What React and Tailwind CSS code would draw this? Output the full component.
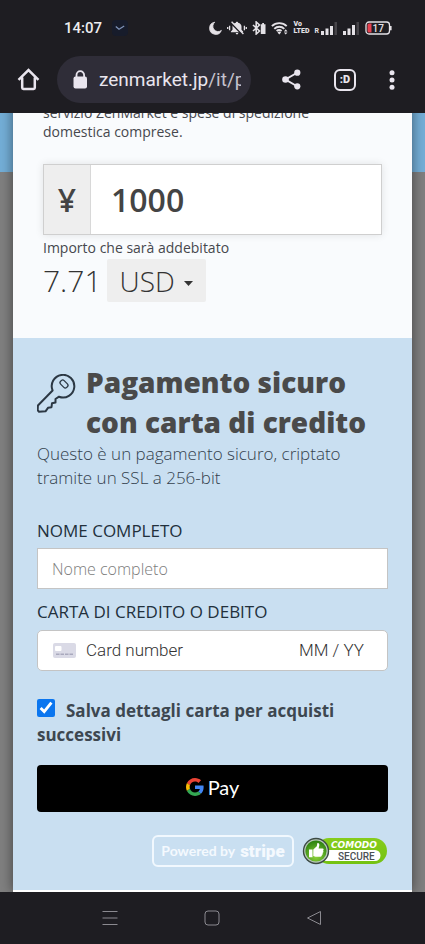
const SANS = "font-['Open_Sans',sans-serif]";
const ROBOTO = "font-['Roboto',sans-serif]";

function StatusIcons() {
  return (
    <div className="flex items-center gap-[5px] text-[#e4e1e6]">
      <svg width="13" height="14" viewBox="0 0 13 14" fill="currentColor">
        <path d="M5.800 1.200A6.100 6.100 0 1 0 12.400 9.400 5.200 5.200 0 0 1 5.800 1.200Z" stroke="currentColor" strokeWidth=".8" strokeLinejoin="round" />
      </svg>
      <svg width="20" height="14" viewBox="0 0 20 14" fill="currentColor">
        <path d="M10 .8c.7 0 1.100.4 1.100 1 2.200.5 3.400 2 3.400 3.800v3.200l1.600 1.700v.8H3.900v-.8l1.600-1.700V5.600c0-1.800 1.200-3.300 3.400-3.800 0-.6.400-1 1.100-1ZM8.700 12.100h2.600a1.300 1.300 0 0 1-2.600 0Z" />
        <path d="M4 1.800 15 13.200" stroke="#1e1d22" strokeWidth="1.800" />
        <path d="M4.600.8 16.400 13" stroke="currentColor" strokeWidth="1.400" />
        <path d="M2.600 4.800v4.400M.7 6v2M17.400 4.800v4.400M19.300 6v2" stroke="currentColor" strokeWidth="1.300" />
      </svg>
      <svg width="14" height="14" viewBox="0 0 14 14" fill="none" stroke="currentColor">
        <path d="m1 4 6.500 6-3.300 3V1l3.300 3L1 10" strokeWidth="1.600" />
        <path d="M8.800 3.300h1.400V2h1.800v1.300h1.500V13H8.800Z" fill="currentColor" stroke="none" />
      </svg>
      <svg width="18" height="14" viewBox="0 0 18 14" fill="none" stroke="currentColor">
        <path d="M.9 5.200a10.500 10.500 0 0 1 14.800 0M3.300 7.800a7 7 0 0 1 10 0M5.600 10.100a4 4 0 0 1 5 0" strokeWidth="1.900" />
        <path d="m6.500 11.400 1.800 2 1.800-2a2.600 2.600 0 0 0-3.600 0Z" fill="currentColor" stroke="none" />
        <path d="m12.900 10.400 1.800-2.200 1.800 2.200ZM12.900 11.400l1.800 2.200 1.800-2.200Z" fill="currentColor" stroke="none" />
      </svg>
      <div className="flex w-[16px] flex-col text-[7px] leading-[7px] font-black">
        <span>Vo</span>
        <span>LTED</span>
      </div>
      <div className="flex items-end gap-[2px]">
        <span className="text-[7px] leading-[7px] font-bold">R</span>
        <svg width="17" height="13" viewBox="0 0 17 13" fill="currentColor">
          <path d="M0 9h3v4H0ZM4.500 6.500h3V13h-3ZM9 4h3v9H9Z" />
          <path d="M13.500 0H16v13h-2.500Z" opacity=".2" />
        </svg>
      </div>
      <svg width="17" height="13" viewBox="0 0 17 13" fill="currentColor">
        <path d="M0 9h3v4H0ZM4.500 6.500h3V13h-3ZM9 3h3v10H9Z" />
        <path d="M13.500 0H16v13h-2.500Z" opacity=".2" />
      </svg>
      <svg width="28" height="14" viewBox="0 0 28 14" fill="none">
        <rect x="1" y="1" width="23.500" height="12" rx="3" stroke="currentColor" strokeWidth="1.300" />
        <path d="M25.800 5v4.200" stroke="currentColor" strokeWidth="1.600" />
        <path d="M2.500 4a1.500 1.500 0 0 1 1.500-1.500h2.500v9H4A1.500 1.500 0 0 1 2.500 10Z" fill="#e5404f" />
        <text x="7.500" y="10.600" fontSize="10" fontWeight="500" fill="currentColor">17</text>
      </svg>
    </div>
  );
}

function BrowserHeader() {
  return (
    <header className={`bg-[#1e1d22] ${ROBOTO}`}>
      <div className="flex h-14 items-center pr-[32px] pl-16 text-[#ececf0]">
        <span className="text-[15px] leading-5 font-medium">14:07</span>
        <span className="ml-[10px] flex h-4 w-4 items-center justify-center rounded-sm bg-[#171c2b]">
          <svg width="10" height="6" viewBox="0 0 10 6" fill="none" stroke="#7f93b8" strokeWidth="1.300">
            <path d="M.8 1.500 4 4.200 9.200 1" />
          </svg>
        </span>
        <div className="ml-auto">
          <StatusIcons />
        </div>
      </div>
      <div className="flex items-center pr-[29px] pb-[10px] pl-[17px] text-[#e9e5ee]">
        <button type="button" aria-label="Home" className="shrink-0">
          <svg width="23" height="23" viewBox="0 0 23 23" fill="none" stroke="currentColor" strokeWidth="2.500">
            <path d="M1.500 11.800 11.500 2l10 9.800M5.200 9.500v10.300q0 1.200 1.200 1.200h10.200q1.200 0 1.200-1.200V9.500" />
          </svg>
        </button>
        <div className="ml-[17px] flex h-[47px] min-w-0 flex-1 items-center rounded-full bg-[#2f2d38] pr-[10px] pl-4">
          <svg width="15" height="19" viewBox="0 0 15 19" className="shrink-0" fill="currentColor">
            <rect x=".5" y="6.500" width="13.500" height="12" rx="2" />
            <path d="M3.500 7.500V5a3.800 3.800 0 0 1 7.600 0v2.500" fill="none" stroke="currentColor" strokeWidth="1.800" />
          </svg>
          <span className="ml-[11px] min-w-0 flex-1 overflow-hidden text-[19px] leading-7 whitespace-nowrap">
            zenmarket.jp<span className="text-[#c6c2cd]">/it/p</span>
          </span>
        </div>
        <button type="button" aria-label="Condividi" className="ml-[31px] shrink-0">
          <svg width="19" height="21" viewBox="0 0 19 21" fill="currentColor">
            <path d="M15.500 3.500 3.500 10.500l12 7" fill="none" stroke="currentColor" strokeWidth="2" />
            <circle cx="15.300" cy="3.700" r="3.100" />
            <circle cx="3.500" cy="10.500" r="3.300" />
            <circle cx="15.300" cy="17.300" r="3.100" />
          </svg>
        </button>
        <button type="button" aria-label="Schede" className="ml-[33px] flex h-[22px] w-[22px] shrink-0 items-center justify-center rounded-md border-2 border-current text-[11px] leading-none font-black">
          :D
        </button>
        <button type="button" aria-label="Menu" className="ml-[32px] shrink-0">
          <svg width="8" height="20" viewBox="0 0 8 20" fill="currentColor">
            <circle cx="4" cy="2.700" r="2.500" />
            <circle cx="4" cy="10" r="2.500" />
            <circle cx="4" cy="17.300" r="2.500" />
          </svg>
        </button>
      </div>
    </header>
  );
}

function AmountSection() {
  return (
    <section className="bg-[#f9fbfd] px-[30px] pb-9 text-[#46484d]">
      <p className="-mt-[10px] text-[14px] leading-[19px]">
        servizio ZenMarket e spese di spedizione
        <br />
        domestica comprese.
      </p>
      <div className="mt-[23px] flex h-[71px] border border-[#cfcfcf] shadow-[0_0_8px_rgba(0,0,0,0.1)]">
        <label htmlFor="amount" className="flex w-[47px] shrink-0 items-center justify-center border-r border-[#d8d8d8] bg-[#eeeeee] text-[32px] font-semibold text-[#444]">
          ¥
        </label>
        <input id="amount" defaultValue="1000" className="min-w-0 flex-1 bg-white px-5 text-[32px] font-semibold text-[#444] outline-none" />
      </div>
      <p className="mt-[3px] text-[14px] leading-5">Importo che sarà addebitato</p>
      <div className="mt-[1px] flex items-center text-[30px] leading-[42px] font-light text-[#333]">
        <span>7.71</span>
        <div className="relative ml-[5px]">
          <select aria-label="Valuta" defaultValue="USD" className="h-[43px] w-[99px] appearance-none rounded-xs bg-[#eeeeee] pl-[13px] text-[28px] font-light outline-none">
            <option>USD</option>
            <option>EUR</option>
            <option>JPY</option>
          </select>
          <svg width="9" height="5" viewBox="0 0 9 5" className="pointer-events-none absolute top-[22px] right-[13px]" fill="#333">
            <path d="M0 0h9L4.500 5Z" />
          </svg>
        </div>
      </div>
    </section>
  );
}

function GooglePayLogo() {
  return (
    <span className="flex items-center gap-1">
      <svg width="18" height="18" viewBox="0 0 48 48">
        <path fill="#EA4335" d="M24 9.500c3.540 0 6.710 1.220 9.210 3.600l6.850-6.850C35.900 2.380 30.470 0 24 0 14.620 0 6.510 5.380 2.560 13.220l7.980 6.190C12.430 13.720 17.740 9.500 24 9.500z" />
        <path fill="#4285F4" d="M46.980 24.550c0-1.570-.15-3.090-.38-4.550H24v9.020h12.940c-.58 2.960-2.260 5.480-4.780 7.180l7.730 6c4.510-4.180 7.090-10.360 7.090-17.650z" />
        <path fill="#FBBC05" d="M10.530 28.590c-.48-1.450-.76-2.990-.76-4.590s.27-3.140.76-4.590l-7.980-6.190C.92 16.460 0 20.120 0 24c0 3.880.92 7.540 2.560 10.780l7.970-6.190z" />
        <path fill="#34A853" d="M24 48c6.480 0 11.930-2.130 15.890-5.810l-7.730-6c-2.150 1.450-4.920 2.300-8.160 2.300-6.260 0-11.570-4.220-13.470-9.910l-7.980 6.190C6.510 42.620 14.620 48 24 48z" />
      </svg>
      <span className="font-['Lato',sans-serif] text-[20px] leading-6 text-white">Pay</span>
    </span>
  );
}

function ComodoBadge() {
  return (
    <svg width="86" height="32" viewBox="0 0 86 32" role="img" aria-label="Comodo Secure">
      <defs>
        <linearGradient id="pill" x1="0" y1="0" x2="0" y2="1">
          <stop offset="0" stopColor="#86cc1c" />
          <stop offset="1" stopColor="#74c212" />
        </linearGradient>
        <radialGradient id="disc" cx=".5" cy=".75" r=".7">
          <stop offset="0" stopColor="#8ed43a" />
          <stop offset="1" stopColor="#2f8412" />
        </radialGradient>
      </defs>
      <rect x="14" y="3" width="71" height="26" rx="13" fill="url(#pill)" />
      <path d="M22 15h51a5.500 5.500 0 0 1 0 11H22Z" fill="#fff" />
      <circle cx="14" cy="16" r="13.200" fill="#3c4a44" />
      <circle cx="14" cy="16" r="11.800" fill="#b9c9bb" />
      <circle cx="14" cy="16" r="10.600" fill="url(#disc)" />
      <path d="M7 14.500h3.500v7.700H7ZM11.300 14.500l3.500-3.200.6-3.300c1.700-.2 2.400 1.200 1.800 3l-.6 2.500h4c1.300.2 1.300 1.700.3 2.200.9.600.6 1.800-.4 2.200.6.800.200 1.700-.7 1.900.3 1-.2 1.900-1.400 1.900h-4.900l-2.200-.8Z" fill="#fff" />
      <text x="29" y="12.500" fontSize="9" fontWeight="700" fontStyle="italic" fontFamily="'DejaVu Sans', sans-serif" fill="#fff">COMODO</text>
      <text x="36" y="24.500" fontSize="10" fontWeight="500" fontFamily="Roboto, sans-serif" fill="#4c5055">SECURE</text>
    </svg>
  );
}

function CardSection() {
  return (
    <section className="border-b-2 border-white bg-[#c9dff1] px-6 pt-[24px] pb-[23px] text-[#33414d]">
      <div className="flex">
        <svg width="40" height="40" viewBox="0 0 40 40" className="mt-[12px] shrink-0" fill="none" stroke="#2c3844" strokeWidth="2" strokeLinejoin="round">
          <path d="M15.600 16.500A11.300 11.300 0 1 1 22 22.700L18.500 25v3.500l-3.500.7-.5 4-3.500.6-2.500 3.500-6.500.4-1.300-1.400.2-4.800Z" />
          <rect x="24.500" y="5.700" width="5" height="8.600" rx="2" transform="rotate(-45 27 10)" strokeWidth="1.300" />
        </svg>
        <h2 className="ml-[9px] text-[28px] leading-10 font-extrabold text-[#4a4a4a]">
          Pagamento sicuro
          <br />
          con carta di credito
        </h2>
      </div>
      <p className="text-[17px] leading-6 font-light">
        Questo è un pagamento sicuro, criptato
        <br />
        tramite un SSL a 256-bit
      </p>

      <form>
        <label htmlFor="name" className="mt-[29px] block text-[17px] leading-6 text-[#22303c]">
          NOME COMPLETO
        </label>
        <input id="name" placeholder="Nome completo" className="mt-[5px] block h-[41px] w-full border border-[#c4c4c4] bg-white px-[14px] text-[16px] font-light outline-none placeholder:text-[#7c7c7c]" />

        <label htmlFor="card" className="mt-[11px] block text-[17px] leading-6 text-[#22303c]">
          CARTA DI CREDITO O DEBITO
        </label>
        <div className={`mt-[6px] flex h-[41px] items-center rounded-[5px] border border-[#c4c4c4] bg-white pl-[15px] text-[17px] font-light ${ROBOTO}`}>
          <svg width="23" height="15" viewBox="0 0 23 15" className="shrink-0">
            <rect width="23" height="15" rx="2" fill="#dadae6" />
            <rect x="2" y="3" width="6.500" height="5" rx="1" fill="#fff" />
            <path d="M3 11.200h17" stroke="#a9a9bd" strokeWidth="1.400" strokeDasharray="3.500 1" />
          </svg>
          <input id="card" placeholder="Card number" className="ml-[10px] min-w-0 flex-1 outline-none placeholder:text-[#333]" />
          <input aria-label="Scadenza" placeholder="MM / YY" className="w-[88px] outline-none placeholder:text-[#333]" />
        </div>

        <label className="mt-[28px] block text-[17px] leading-6 font-bold text-[#3d4750]">
          <input type="checkbox" defaultChecked className="mr-[11px] h-[18px] w-[18px] align-baseline accent-[#0b76ef]" />
          Salva dettagli carta per acquisti successivi
        </label>

        <button type="button" aria-label="Google Pay" className="mt-[18px] flex h-[47px] w-full items-center justify-center rounded-[4px] bg-black pb-1">
          <GooglePayLogo />
        </button>
      </form>

      <div className="mt-[23px] flex items-center justify-end gap-[8px]">
        <a href="#stripe" className="flex h-8 w-[142px] shrink-0 items-center justify-center gap-[5px] rounded-md border-2 border-[#f1f8fe] text-[#f4f9fe]">
          <span className="font-['Lato',sans-serif] text-[14px] leading-5 font-bold">Powered by</span>
          <span className="font-['Roboto',sans-serif] text-[17px] leading-5 font-black">stripe</span>
        </a>
        <a href="#comodo" className="shrink-0">
          <ComodoBadge />
        </a>
      </div>
    </section>
  );
}

function SystemNav() {
  return (
    <nav className="flex h-[52px] items-center justify-center gap-[86px] bg-[#1e1d22] pr-[2px] text-[#8b8a90]">
      <button type="button" aria-label="Recenti">
        <svg width="16" height="16" viewBox="0 0 16 16" fill="none" stroke="currentColor">
          <path d="M.5 1.500h15M.5 8h15M.5 14.500h15" />
        </svg>
      </button>
      <button type="button" aria-label="Home">
        <svg width="16" height="16" viewBox="0 0 16 16" fill="none" stroke="currentColor">
          <rect x="1" y="1" width="14" height="14" rx="3" />
        </svg>
      </button>
      <button type="button" aria-label="Indietro">
        <svg width="16" height="16" viewBox="0 0 16 16" fill="none" stroke="currentColor" strokeLinejoin="round">
          <path d="M14.500 1.500v13L1.500 8Z" />
        </svg>
      </button>
    </nav>
  );
}

export default function App() {
  return (
    <div className={`flex min-h-screen flex-col ${SANS}`}>
      <BrowserHeader />
      <main className="flex-1 overflow-hidden bg-[#808080] bg-[linear-gradient(#74afd8,#74afd8)] bg-[length:100%_59px] bg-no-repeat px-[13px]">
        <div className="shadow-[0_0_12px_rgba(0,0,0,0.5)]">
          <AmountSection />
          <CardSection />
        </div>
      </main>
      <SystemNav />
    </div>
  );
}
